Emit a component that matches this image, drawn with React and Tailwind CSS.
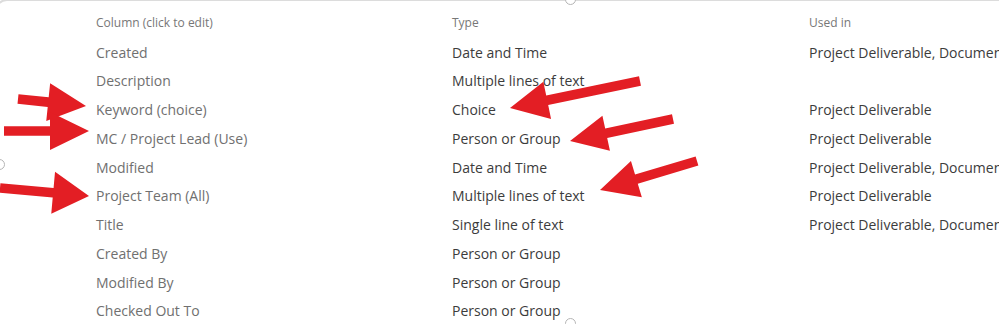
import React from "react";

const rows = [
  { name: "Created", type: "Date and Time", usedIn: "Project Deliverable, Document" },
  { name: "Description", type: "Multiple lines of text", usedIn: "" },
  { name: "Keyword (choice)", type: "Choice", usedIn: "Project Deliverable" },
  { name: "MC / Project Lead (Use)", type: "Person or Group", usedIn: "Project Deliverable" },
  { name: "Modified", type: "Date and Time", usedIn: "Project Deliverable, Document" },
  { name: "Project Team (All)", type: "Multiple lines of text", usedIn: "Project Deliverable" },
  { name: "Title", type: "Single line of text", usedIn: "Project Deliverable, Document" },
  { name: "Created By", type: "Person or Group", usedIn: "" },
  { name: "Modified By", type: "Person or Group", usedIn: "" },
  { name: "Checked Out To", type: "Person or Group", usedIn: "" },
];

// annotation arrows: tail -> tip, head length / half width
const arrows = [
  { tail: [18, 99], tip: [86, 106], len: 38, half: 19 },
  { tail: [4, 131], tip: [89, 131], len: 39, half: 19 },
  { tail: [0, 188], tip: [89, 196], len: 36, half: 21 },
  { tail: [640, 81], tip: [510, 108], len: 38, half: 19 },
  { tail: [673, 119], tip: [570, 141], len: 37, half: 18 },
  { tail: [697, 161], tip: [600, 190], len: 38, half: 19 },
];

function arrowPoints({ tail, tip, len, half }, shaft = 4.8) {
  const dx = tip[0] - tail[0];
  const dy = tip[1] - tail[1];
  const d = Math.hypot(dx, dy);
  const ux = dx / d;
  const uy = dy / d;
  const nx = -uy;
  const ny = ux;
  const bx = tip[0] - ux * len;
  const by = tip[1] - uy * len;
  const pts = [
    [tail[0] + nx * shaft, tail[1] + ny * shaft],
    [bx + nx * shaft, by + ny * shaft],
    [bx + nx * half, by + ny * half],
    tip,
    [bx - nx * half, by - ny * half],
    [bx - nx * shaft, by - ny * shaft],
    [tail[0] - nx * shaft, tail[1] - ny * shaft],
  ];
  return pts.map((p) => p.join(",")).join(" ");
}

function Handle({ className }) {
  return (
    <span
      className={`absolute w-[11px] h-[11px] rounded-full border border-[#b5b5b5] bg-white ${className}`}
    />
  );
}

export default function App() {
  return (
    <div
      className="relative w-[999px] h-[324px] overflow-hidden bg-white"
      style={{ fontFamily: '"Open Sans", "Noto Sans", sans-serif' }}
    >
      {/* selection frame */}
      <div className="absolute left-[-5px] top-[-1px] w-[1200px] h-[400px] rounded-[12px] border-[2px] border-[#dcdcdc]" />
      <Handle className="left-[565px] top-[-6px]" />
      <Handle className="left-[-6px] top-[159px]" />
      <Handle className="left-[565px] top-[318px]" />

      <div className="relative pt-[9px] pl-[96px]">
        <div className="grid grid-cols-[356px_357px_1fr] h-[28.75px] items-center text-[12px] text-[#777]">
          <span>Column (click to edit)</span>
          <span>Type</span>
          <span>Used in</span>
        </div>
        {rows.map((r) => (
          <div
            key={r.name}
            className="grid grid-cols-[356px_357px_1fr] h-[28.75px] items-center text-[14px] whitespace-nowrap"
          >
            <span className="text-[#707070]">{r.name}</span>
            <span className="text-[#3c3c3c]">{r.type}</span>
            <span className="text-[#3c3c3c] overflow-hidden">{r.usedIn}</span>
          </div>
        ))}
      </div>

      <svg className="absolute inset-0" width="999" height="324">
        {arrows.map((a, i) => (
          <polygon key={i} points={arrowPoints(a)} fill="#e31e24" />
        ))}
      </svg>
    </div>
  );
}
